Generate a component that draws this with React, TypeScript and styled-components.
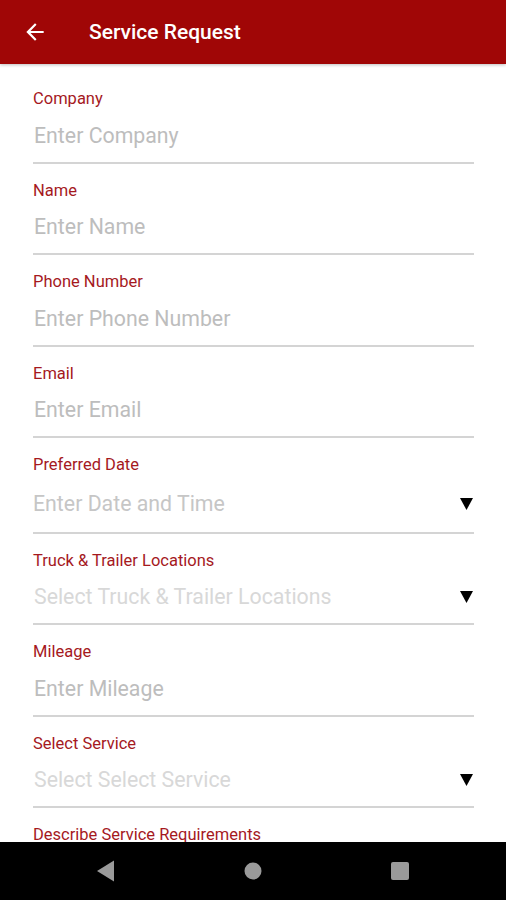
import React from 'react';
import styled, { createGlobalStyle } from 'styled-components';

const GlobalStyle = createGlobalStyle`
  html, body {
    margin: 0;
    padding: 0;
    height: 100%;
    background: #ffffff;
    font-family: Roboto, "Noto Sans", Arial, sans-serif;
  }
  #root {
    height: 100%;
  }
`;

const Screen = styled.div`
  height: 100vh;
  display: flex;
  flex-direction: column;
  overflow: hidden;
`;

const Header = styled.header`
  height: 64px;
  flex-shrink: 0;
  background: #a00606;
  display: flex;
  align-items: center;
  padding-left: 22px;
  box-shadow: 0 1px 3px rgba(0, 0, 0, 0.25);
  position: relative;
  z-index: 1;
`;

const BackButton = styled.button`
  width: 26px;
  height: 26px;
  padding: 0;
  border: none;
  background: transparent;
  display: flex;
  align-items: center;
  justify-content: center;
  cursor: pointer;
`;

const Title = styled.h1`
  margin: 0 0 0 41px;
  font-size: 21px;
  font-weight: 500;
  color: #ffffff;
`;

const Content = styled.main`
  flex: 1;
  overflow: hidden;
  padding: 25px 32px 0 33px;
`;

const Field = styled.div`
  margin-bottom: 17px;
`;

const Label = styled.label`
  display: block;
  font-size: 16.5px;
  line-height: 20px;
  color: #a5191e;
`;

const InputRow = styled.div<{ $spacious?: boolean }>`
  display: flex;
  align-items: center;
  justify-content: space-between;
  height: 25px;
  margin-top: ${p => (p.$spacious ? '16px' : '13.5px')};
  padding-bottom: ${p => (p.$spacious ? '15.5px' : '14px')};
  border-bottom: 2px solid #d4d4d4;
`;

const Placeholder = styled.span<{ $tone: string; $indent: number }>`
  font-size: 21.3px;
  line-height: 25px;
  color: ${p => p.$tone};
  padding-left: ${p => p.$indent}px;
  white-space: nowrap;
`;

const Caret = styled.svg`
  width: 13px;
  height: 12px;
  margin-right: 1px;
  flex-shrink: 0;
`;

const NavBar = styled.nav`
  height: 58px;
  flex-shrink: 0;
  background: #000000;
  display: flex;
  align-items: center;
  justify-content: center;
  gap: 125px;
`;

const NavIcon = styled.svg`
  width: 22px;
  height: 22px;
`;

type FieldDef = {
  label: string;
  placeholder?: string;
  dropdown?: boolean;
  spacious?: boolean;
  tone?: string;
  indent?: number;
};

const fields: FieldDef[] = [
  { label: 'Company', placeholder: 'Enter Company' },
  { label: 'Name', placeholder: 'Enter Name' },
  { label: 'Phone Number', placeholder: 'Enter Phone Number' },
  { label: 'Email', placeholder: 'Enter Email' },
  { label: 'Preferred Date', placeholder: 'Enter Date and Time', dropdown: true, spacious: true, tone: '#c6c6c6', indent: 0 },
  { label: 'Truck & Trailer Locations', placeholder: 'Select Truck & Trailer Locations', dropdown: true, tone: '#d8d8d8' },
  { label: 'Mileage', placeholder: 'Enter Mileage' },
  { label: 'Select Service', placeholder: 'Select Select Service', dropdown: true, tone: '#d8d8d8' },
  { label: 'Describe Service Requirements' },
];

const App: React.FC = () => {
  return (
    <Screen>
      <GlobalStyle />
      <Header>
        <BackButton aria-label="Back">
          <svg width="26" height="26" viewBox="0 0 24 24" fill="#ffffff">
            <path d="M20 11H7.83l5.59-5.59L12 4l-8 8 8 8 1.41-1.41L7.83 13H20v-2z" />
          </svg>
        </BackButton>
        <Title>Service Request</Title>
      </Header>
      <Content>
        {fields.map(f => (
          <Field key={f.label}>
            <Label>{f.label}</Label>
            {f.placeholder && (
              <InputRow $spacious={f.spacious}>
                <Placeholder $tone={f.tone ?? '#bdbdbd'} $indent={f.indent ?? 1}>
                  {f.placeholder}
                </Placeholder>
                {f.dropdown && (
                  <Caret viewBox="0 0 13 12">
                    <path d="M0 0H13L6.5 12Z" fill="#000000" />
                  </Caret>
                )}
              </InputRow>
            )}
          </Field>
        ))}
      </Content>
      <NavBar>
        <NavIcon viewBox="0 0 22 22">
          <path d="M19 0.5V21.5L2 11Z" fill="#9a9a9a" />
        </NavIcon>
        <NavIcon viewBox="0 0 22 22">
          <circle cx="11" cy="11" r="8.5" fill="#9a9a9a" />
        </NavIcon>
        <NavIcon viewBox="0 0 22 22">
          <rect x="2" y="2" width="18" height="18" rx="2" fill="#9a9a9a" />
        </NavIcon>
      </NavBar>
    </Screen>
  );
};

export default App;
